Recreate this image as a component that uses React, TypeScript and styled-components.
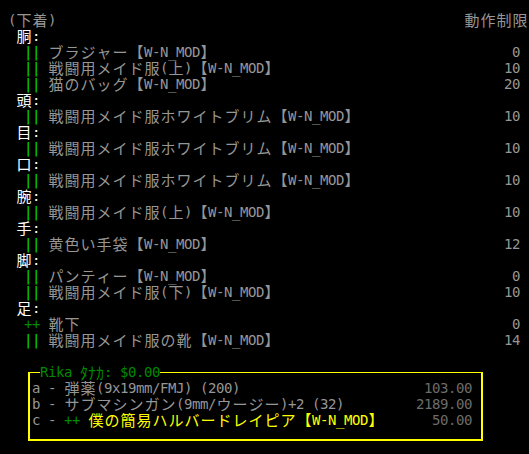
import React from "react";
import styled, { createGlobalStyle } from "styled-components";

const GlobalStyle = createGlobalStyle`
  html, body {
    margin: 0;
    padding: 0;
    background: #000;
  }
`;

const GRAY = "#969696";
const DIM = "#6c6c6c";
const WHITE = "#ffffff";
const GREEN = "#00e000";
const DARK_GREEN = "#008a00";
const YELLOW = "#ffff00";

// one terminal cell: 8px for ascii and half-width kana, 16px for CJK
const Cell = styled.span<{ $wide: boolean; $cjk: boolean }>`
  display: inline-block;
  width: ${(p) => (p.$wide ? 16 : 8)}px;
  height: 16px;
  text-align: center;
  white-space: pre;
  overflow: visible;
  vertical-align: top;
  font-family: ${(p) =>
    p.$cjk ? '"Noto Sans CJK JP", sans-serif' : '"DejaVu Sans Mono", monospace'};
  font-size: ${(p) => (p.$cjk ? (p.$wide ? 15 : 16) : 14)}px;
`;

const Run = styled.span<{ $color: string }>`
  color: ${(p) => p.$color};
  white-space: pre;
`;

const isHalfKana = (c: number) => c >= 0xff61 && c <= 0xff9f;

const Txt: React.FC<{ text: string; color?: string }> = ({ text, color = GRAY }) => (
  <Run $color={color}>
    {Array.from(text).map((ch, i) => {
      const c = ch.codePointAt(0) || 0;
      const cjk = c >= 0x2e80;
      return (
        <Cell key={i} $wide={cjk && !isHalfKana(c)} $cjk={cjk}>
          {ch}
        </Cell>
      );
    })}
  </Run>
);

const Screen = styled.div`
  width: 520px;
  padding: 12px 0 0 8px;
  line-height: 16px;
`;

const Row = styled.div<{ $indent?: number; $right?: number }>`
  display: flex;
  justify-content: space-between;
  height: 16px;
  padding-left: ${(p) => p.$indent || 0}px;
  padding-right: ${(p) => p.$right || 0}px;
`;

const Side = styled.div`
  display: flex;
`;

const Box = styled.div`
  position: relative;
  margin: 24px 0 0 20px;
  width: 440px;
  border: 2px solid ${YELLOW};
  border-top-width: 1px;
  padding: 7px 9px 11px 2px;
`;

const BoxTitle = styled.div`
  position: absolute;
  top: -9px;
  left: 10px;
  height: 16px;
  background: #000;
`;

type Item = { mark: "||" | "++"; name: string; mod: boolean; limit: number };

const sections: { label: string; items: Item[] }[] = [
  {
    label: "胴",
    items: [
      { mark: "||", name: "ブラジャー", mod: true, limit: 0 },
      { mark: "||", name: "戦闘用メイド服(上)", mod: true, limit: 10 },
      { mark: "||", name: "猫のバッグ", mod: true, limit: 20 },
    ],
  },
  { label: "頭", items: [{ mark: "||", name: "戦闘用メイド服ホワイトブリム", mod: true, limit: 10 }] },
  { label: "目", items: [{ mark: "||", name: "戦闘用メイド服ホワイトブリム", mod: true, limit: 10 }] },
  { label: "口", items: [{ mark: "||", name: "戦闘用メイド服ホワイトブリム", mod: true, limit: 10 }] },
  { label: "腕", items: [{ mark: "||", name: "戦闘用メイド服(上)", mod: true, limit: 10 }] },
  { label: "手", items: [{ mark: "||", name: "黄色い手袋", mod: true, limit: 12 }] },
  {
    label: "脚",
    items: [
      { mark: "||", name: "パンティー", mod: true, limit: 0 },
      { mark: "||", name: "戦闘用メイド服(下)", mod: true, limit: 10 },
    ],
  },
  {
    label: "足",
    items: [
      { mark: "++", name: "靴下", mod: false, limit: 0 },
      { mark: "||", name: "戦闘用メイド服の靴", mod: true, limit: 14 },
    ],
  },
];

const App: React.FC = () => {
  return (
    <>
      <GlobalStyle />
      <Screen>
        <Row>
          <Txt text="(下着)" />
          <Txt text="動作制限" />
        </Row>
        {sections.map((s) => (
          <React.Fragment key={s.label}>
            <Row $indent={8}>
              <Txt text={s.label + ":"} color={WHITE} />
            </Row>
            {s.items.map((it, i) => (
              <Row key={i} $indent={16} $right={8}>
                <Side>
                  <Txt text={it.mark} color={it.mark === "||" ? GREEN : DARK_GREEN} />
                  <Txt text={" " + it.name + (it.mod ? "【W-N_MOD】" : "")} />
                </Side>
                <Txt text={String(it.limit)} />
              </Row>
            ))}
          </React.Fragment>
        ))}
        <Box>
          <BoxTitle>
            <Txt text="Rika ﾀﾅｶ: $0.00" color={DARK_GREEN} />
          </BoxTitle>
          <Row>
            <Txt text="a - 弾薬(9x19mm/FMJ) (200)" />
            <Txt text="103.00" color={DIM} />
          </Row>
          <Row>
            <Txt text="b - サブマシンガン(9mm/ウージー)+2 (32)" />
            <Txt text="2189.00" color={DIM} />
          </Row>
          <Row>
            <Side>
              <Txt text="c - " />
              <Txt text="++" color={DARK_GREEN} />
              <Txt text=" 僕の簡易ハルバードレイピア【W-N_MOD】" color={YELLOW} />
            </Side>
            <Txt text="50.00" color={DIM} />
          </Row>
        </Box>
      </Screen>
    </>
  );
};

export default App;
